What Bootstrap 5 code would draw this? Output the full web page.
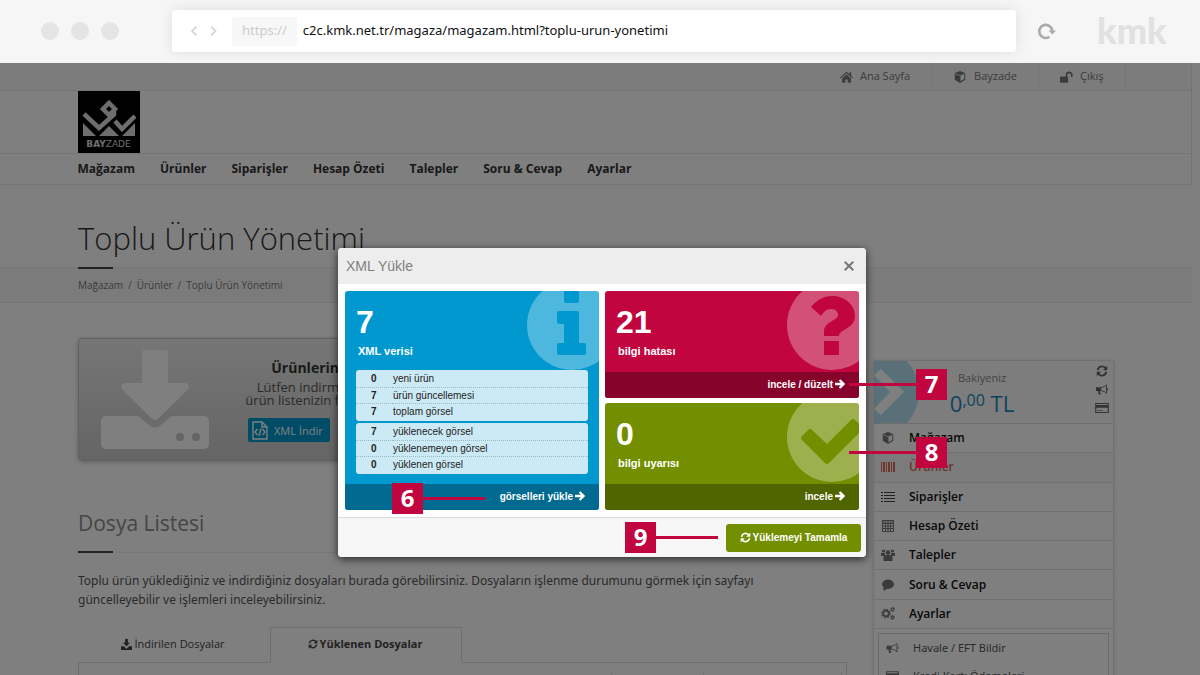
<!DOCTYPE html>
<html lang="tr">
<head>
<meta charset="utf-8">
<meta name="viewport" content="width=device-width, initial-scale=1">
<title>Toplu Ürün Yönetimi</title>
<link rel="stylesheet" href="https://cdn.jsdelivr.net/npm/bootstrap@5.3.0/dist/css/bootstrap.min.css">
<style>
  body { font-family: "Open Sans", sans-serif; font-size: 13px; color: #333; height: 100vh; overflow: hidden; }
  a { color: inherit; text-decoration: none; }
  svg { display: block; flex: none; }
  button { font-family: inherit; }

  /* browser chrome */
  .chrome { height: 63px; background: #f6f6f6; padding: 0 36px 1px 41px; }
  .dots { width: 131px; gap: 12px; }
  .dots span { width: 18px; height: 18px; border-radius: 50%; background: #e4e4e4; }
  .address { height: 42px; background: #fff; border-radius: 3px; box-shadow: 0 0 14px rgba(0,0,0,.1); padding: 0 16px; font-family: "Noto Sans", sans-serif; }
  .address button, .reload { border: 0; background: none; padding: 0; }
  .address button { width: 18px; color: #d8d8d8; }
  .scheme { height: 29px; margin: 0 6px 0 8px; padding: 0 10px; border-radius: 3px; background: #f7f7f7; color: #ccc; line-height: 27px; }
  .address input { border: 0; padding: 0; outline: 0; color: #111; height: 30px; padding-bottom: 2px; }
  .reload { width: 20px; margin: 0 40px 0 21px; color: #aaa; }
  .brandmark { font: 900 36px/36px Lato, sans-serif; color: #e1e1e1; width: 67px; padding-bottom: 2px; }

  /* shop page */
  .site { background: #fff; }
  .sheet { margin-right: 8px; }
  .wrap { max-width: 1060px; margin: 0 auto; padding: 0 12px; }
  .site-head { border-right: 1px solid #e8e8e8; border-bottom: 1px solid #ebebeb; }
  .topnav { background: #f9f9f9; border-bottom: 1px solid #ebebeb; font-size: 11px; color: #777; height: 28px; }
  .topnav a { padding: 0 21px; gap: 7px; height: 27px; border-right: 1px solid #ebebeb; }
  .logo-row { height: 63px; border-bottom: 1px solid #ebebeb; }
  .shop-logo { width: 62px; height: 62px; background: #000; color: #ddd; padding-top: 7px; }
  .shop-logo small { font: 9px/10px "DejaVu Sans", sans-serif; }
  .mainnav { height: 30px; gap: 25px; font-size: 12px; font-weight: 700; }
  .page-title { font-size: 31px; font-weight: 300; line-height: 42px; margin: 32px 0 8px; color: #333; }
  .rule { width: 35px; height: 2px; background: #444; }
  .crumbs { background: #f7f7f7; border: solid #ededed; border-width: 1px 0; height: 36px; font-size: 10px; color: #777; }
  .crumbs .rule { margin-top: -1px; }
  .crumbs ol { --bs-breadcrumb-item-padding-x: 5px; --bs-breadcrumb-divider-color: #777; --bs-breadcrumb-item-active-color: #777; font-size: 10px; padding-top: 9px; }
  .columns { gap: 26px; padding-top: 35px; }
  .side { width: 241px; padding-top: 22px; }

  .download { height: 123px; border: 1px solid #c2c2c2; border-radius: 4px; background: linear-gradient(#ececec, #cacaca); box-shadow: 0 1px 5px rgba(0,0,0,.25); padding: 11px 0 0 22px; gap: 39px; }
  .download-text { width: 91px; padding-top: 8px; font-size: 13px; line-height: 13px; color: #555; }
  .download-text strong { font-size: 14px; line-height: 20px; margin-bottom: 3px; color: #333; }
  .nowrap { white-space: nowrap; }
  .xml-btn { width: 82px; height: 24px; margin-top: 11px; padding: 0 4px; gap: 6px; border: 0; border-radius: 2px; background: #0098cf; color: #fff; font: 11px "Open Sans", sans-serif; }
  .section-title { font-size: 21px; line-height: 30px; margin: 47px 0 13px; color: #8c8c8c; }
  .section-rule { gap: 5px; margin-bottom: 18px; }
  .section-rule .line { height: 1px; background: #eee; }
  .intro, .side-more { font-family: "Noto Sans", sans-serif; }
  .intro { max-width: 740px; font-size: 12px; line-height: 19px; margin-bottom: 18px; color: #555; }
  .file-tabs { --bs-nav-tabs-border-color: #ddd; --bs-nav-tabs-border-radius: 0; font-size: 11px; }
  .file-tabs .nav-link { width: 192px; height: 36px; padding: 0 2px 2px 0; gap: 2px; color: #444; }
  .file-tabs .nav-link.active { font-weight: 700; color: #444; border-color: #ddd #ddd #fff; }
  .file-pane { height: 100px; border: solid #ddd; border-width: 0 1px; padding: 9px 4px 0 0; }
  .file-grid { height: 90px; border-right: 1px solid #e2e2e2; }
  .file-grid div { border-right: 1px solid #e8e8e8; }

  .side-box { border: 1px solid #e2e2e2; box-shadow: 0 1px 4px rgba(0,0,0,.15); }
  .balance { height: 63px; gap: 21px; background: #fafafa; border-bottom: 1px solid #ddd; color: #1a86c0; }
  .balance p { width: 84px; padding-top: 8px; color: #888; font-size: 11px; line-height: 18px; }
  .balance strong { font-weight: 400; font-size: 22px; line-height: 32px; color: #1a86c0; }
  .balance sup { font-size: 16px; top: -6px; }
  .quick { padding: 4px 4px 0 0; gap: 6px; color: #666; }
  .side-menu { height: 205px; font-size: 12px; font-weight: 600; color: #111; }
  .side-menu li { border-bottom: 1px solid #e2e2e2; }
  .side-menu a, .side-more a { gap: 14px; padding-left: 7px; }
  .side-menu svg, .side-more svg { color: #777; }
  .side-menu .current { background: #f6f6f6; }
  .side-menu .current a, .side-menu .current svg { color: #dc6a55; }
  .side-more { margin: 4px 4px 0; border: 1px solid #d4d4d4; font-size: 11px; color: #555; }
  .side-more li { height: 28px; }
  .shade { background: rgba(0,0,0,.5); }

  /* dialog */
  .xml-dialog { width: 528px; top: 185px; left: calc(50% - 262px); border-radius: 4px; background: #fff; box-shadow: 0 2px 8px rgba(0,0,0,.7); font-family: "Liberation Sans", sans-serif; font-size: 10px; }
  .xml-head { height: 36px; padding: 0 12px 0 8px; background: #ededed; border-radius: 4px 4px 0 0; color: #808080; }
  .xml-head h2 { font-size: 14px; font-weight: 400; }
  .xml-head button { border: 0; background: none; padding: 0; color: #777; }
  .xml-body { padding: 7px; gap: 6px; }
  .tile-col { flex: 1; gap: 5px; }
  .tile { border-radius: 3px; overflow: hidden; font-weight: 700; }
  .tile-main { padding: 13px 11px 10px; }
  .tile-main b { font-size: 32px; line-height: 36px; color: #fff; }
  .tile-main span { font-size: 11px; line-height: 16px; margin: 3px 2px 0; color: #fff; }
  .tile-icon { position: absolute; top: -12px; right: -19px; }
  .tile-foot { height: 26px; padding: 0 14px 2px 0; gap: 2px; color: #fff; }
  .blue { background: #0098cf; color: #0098cf; }
  .blue .tile-foot { background: #006a90; }
  .red { background: #c1053f; color: #c1053f; }
  .red .tile-foot { background: #86032b; }
  .green { background: #738f00; color: #738f00; }
  .green .tile-foot { background: #506400; }
  .lists { margin-top: 11px; gap: 2px; }
  .counts { background: #cceaf5; border-radius: 3px; padding: 1px 0 2px; color: #222; }
  .counts table { width: 100%; }
  .counts td { height: 16px; padding: 0; line-height: 15px; font-weight: 400; border-bottom: 1px dotted #9db9c4; }
  .counts tr:last-child td { border-bottom: 0; }
  .counts td:first-child { width: 37px; padding-left: 15px; font-weight: 700; }
  .xml-foot { height: 40px; padding-right: 5px; background: #f6f6f6; border-top: 1px solid #ddd; border-radius: 0 0 4px 4px; }
  .finish { width: 135px; height: 28px; border: 0; border-radius: 3px; background: #738f00; color: #fff; font-weight: 700; gap: 2px; padding: 0; }

  /* numbered callouts over the dialog */
  .callout { position: absolute; z-index: 3; }
  .callout b { width: 31px; height: 31px; background: #c1053f; color: #fff; font: 700 24px/30px "Open Sans", sans-serif; text-align: center; }
  .callout i { height: 3px; background: #c1053f; }
  .c6 { left: 54px; top: 235px; }
  .c7 { left: 511px; top: 121px; }
  .c8 { left: 511px; top: 189px; }
  .c9 { left: 287px; top: 274px; }
  .c6 i, .c9 i { width: 62px; }
  .c7 i, .c8 i { width: 67px; }
</style>
<script src="https://cdn.jsdelivr.net/npm/bootstrap@5.3.0/dist/js/bootstrap.bundle.min.js"></script>
</head>
<body class="d-flex flex-column">

<svg width="0" height="0" class="position-absolute" aria-hidden="true">
  <symbol id="sync" viewBox="0 0 16 16"><path fill="none" stroke="currentColor" stroke-width="2.4" d="M2.2 7A6 6 0 0 1 12.6 4M13.8 9A6 6 0 0 1 3.4 12"/><path fill="currentColor" d="M15 1v6H9zM1 15V9h6z"/></symbol>
  <symbol id="cube" viewBox="0 0 16 16"><path fill="currentColor" d="M8 0l7 2.700v8.800L8 16l-7-4.500V2.700z"/><path fill="#fff" d="M8.600 6.700l5-2v6l-5 3.100z"/><path stroke="#fff" stroke-width=".9" fill="none" d="M1.500 3.600L8 6.200l6.500-2.600"/></symbol>
  <symbol id="horn" viewBox="0 0 16 16"><path fill="currentColor" d="M0 5h7v5H5l1.500 4.500H3.700L2.500 10H0z"/><path fill="none" stroke="currentColor" stroke-width="1.200" d="M7 5.200c3 0 5.500-1.500 7-3.400v11.400c-1.500-1.900-4-3.300-7-3.400M15.300 6v3"/></symbol>
  <symbol id="card-i" viewBox="0 0 16 14"><path fill="none" stroke="currentColor" stroke-width="1.300" d="M.7 1.700h14.600v10.600H.7z"/><path fill="currentColor" d="M1 3.500h14v3.300H1zM2.500 9.500h2v1h-2zM5.500 9.500h3v1h-3z"/></symbol>
  <symbol id="arrow" viewBox="0 0 12 12"><path fill="none" stroke="currentColor" stroke-width="2.800" d="M0 6h10M5.500 1.200L10.300 6l-4.800 4.800"/></symbol>
</svg>

<header class="chrome d-flex align-items-center flex-shrink-0">
  <div class="dots d-flex flex-shrink-0"><span></span><span></span><span></span></div>
  <div class="address d-flex align-items-center flex-grow-1">
    <button type="button" aria-label="Geri"><svg width="12" height="12" viewBox="0 0 12 12" fill="none" stroke="currentColor" stroke-width="1.800"><path d="M8.500 1.500L4 6l4.500 4.500"/></svg></button>
    <button type="button" aria-label="İleri"><svg width="12" height="12" viewBox="0 0 12 12" fill="none" stroke="currentColor" stroke-width="1.800"><path d="M5 1.500L9.500 6 5 10.500"/></svg></button>
    <span class="scheme">https://</span>
    <input class="flex-grow-1" type="text" aria-label="Adres" value="c2c.kmk.net.tr/magaza/magazam.html?toplu-urun-yonetimi">
  </div>
  <button class="reload" type="button" aria-label="Yenile"><svg width="20" height="18" viewBox="0 0 20 18"><path d="M12.500 14.700A6.500 6.500 0 1 1 15.200 9" fill="none" stroke="currentColor" stroke-width="2.600"/><path d="M11.500 8.500h7.500l-3.700 4z" fill="currentColor"/></svg></button>
  <span class="brandmark">kmk</span>
</header>

<div class="site position-relative flex-grow-1">
 <div class="position-absolute top-0 start-0 w-100 h-100 overflow-hidden">
 <div class="sheet">
  <div class="site-head">
    <div class="topnav"><nav class="wrap d-flex justify-content-end pe-0">
      <a href="#" class="d-flex align-items-center"><svg width="13" height="12" viewBox="0 0 16 14" fill="currentColor"><path d="M8 .5L0 7.500l1 1 7-6 7 6 1-1-2.200-2V1.200h-2v2.500z"/><path d="M8 4L2.500 8.700V14h4v-4h3v4h4V8.700z"/></svg>Ana Sayfa</a>
      <a href="#" class="d-flex align-items-center"><svg width="14" height="12"><use href="#cube"/></svg>Bayzade</a>
      <a href="#" class="d-flex align-items-center"><svg width="13" height="12" viewBox="0 0 16 14"><path fill="currentColor" d="M0 6.500h10V14H0z"/><path fill="none" stroke="currentColor" stroke-width="2" d="M8 7V4.500a3.200 3.200 0 0 1 6.500 0V7"/></svg>Çıkış</a>
    </nav></div>
    <div class="logo-row"><div class="wrap">
      <a href="#" class="shop-logo d-flex flex-column align-items-center"><svg width="54" height="41" viewBox="0 0 54 41">
        <path fill="none" stroke="currentColor" stroke-width="4.500" d="M27 5l6 6-6 6-6-6zM32 12.500v4L17 30 2 16M33 23l7 8 13-13"/>
        <path fill="currentColor" d="M1 25l13 13H1zM27 28l10 10H17zM53 25v13H40z"/></svg>
        <small><b>BAY</b>ZADE</small></a>
    </div></div>
    <nav class="mainnav wrap d-flex align-items-center">
      <a href="#">Mağazam</a><a href="#">Ürünler</a><a href="#">Siparişler</a><a href="#">Hesap Özeti</a><a href="#">Talepler</a><a href="#">Soru &amp; Cevap</a><a href="#">Ayarlar</a>
    </nav>
  </div>

  <div class="wrap"><h1 class="page-title">Toplu Ürün Yönetimi</h1></div>
  <div class="crumbs"><div class="wrap"><div class="rule"></div>
    <nav aria-label="Konum"><ol class="breadcrumb mb-0"><li class="breadcrumb-item"><a href="#">Mağazam</a></li><li class="breadcrumb-item"><a href="#">Ürünler</a></li><li class="breadcrumb-item active">Toplu Ürün Yönetimi</li></ol></nav>
  </div></div>

  <div class="wrap columns d-flex">
    <main class="flex-grow-1">
      <div class="download d-flex align-items-start">
        <svg width="108" height="100" viewBox="0 0 108 100"><rect y="66" width="108" height="33" rx="5" fill="#fff"/><path d="M36 65l12 10q6 5 12 0l12-10z" fill="#d6d6d6"/><path d="M44 0h20q3 0 3 3v30h17q6 1 3 6L58 68q-4 4-8 0L21 39q-3-5 3-6h17V3q0-3 3-3z" fill="#fff"/><circle cx="79" cy="87" r="4" fill="#cacaca"/><circle cx="95" cy="87" r="4" fill="#cacaca"/></svg>
        <div class="download-text">
          <div class="nowrap d-flex flex-column align-items-end"><strong>Ürünlerin</strong><span>Lütfen indirm</span><span>ürün listenizin f</span></div>
          <button type="button" class="xml-btn d-flex align-items-center"><svg width="16" height="19" viewBox="0 0 16 19" fill="none" stroke="currentColor" stroke-width="1.400"><path d="M1 1h9l5 5v12H1zM10 1v5h5M5.500 8L3 11l2.500 3M10.500 8l2.500 3-2.500 3M9 7.500L7 15"/></svg><span class="nowrap">XML İndir</span></button>
        </div>
      </div>
      <h2 class="section-title">Dosya Listesi</h2>
      <div class="section-rule d-flex align-items-center"><div class="rule"></div><div class="line flex-grow-1"></div></div>
      <p class="intro">Toplu ürün yüklediğiniz ve indirdiğiniz dosyaları burada görebilirsiniz. Dosyaların işlenme durumunu görmek için sayfayı güncelleyebilir ve işlemleri inceleyebilirsiniz.</p>
      <ul class="nav nav-tabs file-tabs">
        <li class="nav-item"><a href="#" class="nav-link d-flex align-items-center justify-content-center"><svg width="11" height="11" viewBox="0 0 12 12" fill="currentColor"><path d="M4.500 0h3v4H10L6 8 2 4h2.500zM0 8h3l3 2.500L9 8h3v4H0z"/></svg>İndirilen Dosyalar</a></li>
        <li class="nav-item"><a href="#" class="nav-link active d-flex align-items-center justify-content-center"><svg width="10" height="10"><use href="#sync"/></svg>Yüklenen Dosyalar</a></li>
      </ul>
      <div class="file-pane"><div class="file-grid d-flex"><div style="width:70%"></div><div style="width:12%"></div></div></div>
    </main>

    <aside class="side flex-shrink-0"><div class="side-box">
      <div class="balance d-flex">
        <svg width="45" height="62" viewBox="0 0 45 62"><circle cx="0" cy="31" r="45" fill="#b2e0f1"/><path d="M0 14l7-6 23 23L7 54l-7-6 16-17z" fill="#fff"/></svg>
        <p class="mb-0 text-center nowrap">Bakiyeniz<br><strong>0<sup>,00</sup> TL</strong></p>
        <div class="quick d-flex flex-column align-items-center ms-auto"><svg width="12" height="12"><use href="#sync"/></svg><svg width="12" height="13"><use href="#horn"/></svg><svg width="14" height="12"><use href="#card-i"/></svg></div>
      </div>
      <ul class="side-menu list-unstyled mb-0 d-flex flex-column">
        <li class="flex-fill d-flex"><a href="#" class="d-flex align-items-center"><svg width="14" height="12"><use href="#cube"/></svg>Mağazam</a></li>
        <li class="flex-fill d-flex current"><a href="#" class="d-flex align-items-center"><svg width="14" height="10" viewBox="0 0 14 10" fill="currentColor"><path d="M0 0h1v10H0zM2 0h2v10H2zM5 0h1v10H5zM7 0h2v10H7zM10 0h1v10h-1zM12 0h2v10h-2z"/></svg>Ürünler</a></li>
        <li class="flex-fill d-flex"><a href="#" class="d-flex align-items-center"><svg width="14" height="10" viewBox="0 0 14 10" fill="#444"><path d="M0 0h2v1H0zM3 0h11v1H3zM0 3h2v1H0zM3 3h11v1H3zM0 6h2v1H0zM3 6h11v1H3zM0 9h2v1H0zM3 9h11v1H3z"/></svg>Siparişler</a></li>
        <li class="flex-fill d-flex"><a href="#" class="d-flex align-items-center"><svg width="14" height="12" viewBox="0 0 14 12" fill="none" stroke="currentColor"><path d="M1.500.5h11v11h-11zM1.500 3.500h11M1.500 6h11M1.500 8.500h11M4.500 3.500v8M7 3.500v8M9.500 3.500v8M2 2h10"/></svg>Hesap Özeti</a></li>
        <li class="flex-fill d-flex"><a href="#" class="d-flex align-items-center"><svg width="14" height="12" viewBox="0 0 14 12" fill="currentColor"><circle cx="2.500" cy="2" r="1.600"/><circle cx="11.500" cy="2" r="1.600"/><circle cx="7" cy="3.600" r="2.300"/><path d="M0 4h4v3H0zM10 4h4v3h-4zM2.500 8q1-2 2.500-2h4q1.500 0 2.500 2v4h-9z"/></svg>Talepler</a></li>
        <li class="flex-fill d-flex"><a href="#" class="d-flex align-items-center"><svg width="14" height="12" viewBox="0 0 14 12" fill="currentColor"><ellipse cx="7" cy="5.200" rx="6" ry="4.700"/><path d="M2.500 7v5l5-3z"/></svg>Soru &amp; Cevap</a></li>
        <li class="flex-fill d-flex"><a href="#" class="d-flex align-items-center"><svg width="14" height="13" viewBox="0 0 14 13" fill="none" stroke="currentColor"><circle cx="5" cy="6.500" r="2.800" stroke-width="1.800"/><circle cx="5" cy="6.500" r="4.200" stroke-width="1.300" stroke-dasharray="1.700 1.600"/><circle cx="11.500" cy="2.500" r="1.500" stroke-width="1.300"/><circle cx="11.500" cy="10.500" r="1.500" stroke-width="1.300"/></svg>Ayarlar</a></li>
      </ul>
      <ul class="side-more list-unstyled">
        <li class="d-flex"><a href="#" class="d-flex align-items-center"><svg width="13" height="12"><use href="#horn"/></svg>Havale / EFT Bildir</a></li>
        <li class="d-flex"><a href="#" class="d-flex align-items-center"><svg width="13" height="12"><use href="#card-i"/></svg>Kredi Kartı Ödemeleri</a></li>
      </ul>
    </div></aside>
  </div>
 </div>
 <div class="shade position-absolute top-0 start-0 w-100 h-100"></div>
 </div>

 <section class="xml-dialog position-absolute" role="dialog" aria-labelledby="xmlTitle">
  <div class="xml-head d-flex align-items-center justify-content-between"><h2 id="xmlTitle" class="mb-0">XML Yükle</h2>
    <button type="button" aria-label="Kapat"><svg width="10" height="10" viewBox="0 0 10 10" stroke="currentColor" stroke-width="2"><path d="M.7.7l8.600 8.600M9.300.7L.7 9.300"/></svg></button></div>
  <div class="xml-body d-flex">
    <div class="tile-col d-flex flex-column">
      <div class="tile blue position-relative d-flex flex-column">
        <svg class="tile-icon" width="92" height="92" viewBox="0 0 92 92"><circle cx="46" cy="46" r="45" fill="#fff" fill-opacity=".3"/><path fill="currentColor" d="M38 8h15v14q0 2-2 2H40q-2 0-2-2zM33 32h18q2 0 2 2v30h5q2 0 2 2v8q0 2-2 2H33q-2 0-2-2v-8q0-2 2-2h5V45h-5q-2 0-2-2v-9q0-2 2-2z"/></svg>
        <div class="tile-main position-relative"><b class="d-block">7</b><span class="d-block">XML verisi</span>
          <div class="lists d-flex flex-column">
            <div class="counts"><table>
              <tr><td>0</td><td>yeni ürün</td></tr>
              <tr><td>7</td><td>ürün güncellemesi</td></tr>
              <tr><td>7</td><td>toplam görsel</td></tr>
            </table></div>
            <div class="counts"><table>
              <tr><td>7</td><td>yüklenecek görsel</td></tr>
              <tr><td>0</td><td>yüklenemeyen görsel</td></tr>
              <tr><td>0</td><td>yüklenen görsel</td></tr>
            </table></div>
          </div>
        </div>
        <a href="#" class="tile-foot d-flex align-items-center justify-content-end">görselleri yükle<svg width="10" height="10"><use href="#arrow"/></svg></a>
      </div>
    </div>
    <div class="tile-col d-flex flex-column">
      <div class="tile red position-relative flex-fill d-flex flex-column">
        <svg class="tile-icon" width="92" height="92" viewBox="0 0 92 92"><circle cx="46" cy="46" r="45" fill="#fff" fill-opacity=".3"/><path fill="currentColor" d="M25 28C31 21 37 17 46 17c12 0 23 8 23 20 0 13-16 13-16 20H38v-4c0-11 14-11 14-17 0-4-3-6-7-6-5 0-7 3-10 7zM38 62h15v14H38z"/></svg>
        <div class="tile-main flex-grow-1"><b class="d-block">21</b><span class="d-block">bilgi hatası</span></div>
        <a href="#" class="tile-foot d-flex align-items-center justify-content-end position-relative">incele / düzelt<svg width="10" height="10"><use href="#arrow"/></svg></a>
      </div>
      <div class="tile green position-relative flex-fill d-flex flex-column">
        <svg class="tile-icon" width="92" height="92" viewBox="0 0 92 92"><circle cx="46" cy="46" r="45" fill="#fff" fill-opacity=".3"/><path fill="currentColor" d="M16 49q-2-2 0-4l6-6q2-2 4 0l15 14 24-24q2-2 4 0l7 6q2 2 0 4L43 72q-2 2-4 0z"/></svg>
        <div class="tile-main flex-grow-1"><b class="d-block">0</b><span class="d-block">bilgi uyarısı</span></div>
        <a href="#" class="tile-foot d-flex align-items-center justify-content-end position-relative">incele<svg width="10" height="10"><use href="#arrow"/></svg></a>
      </div>
    </div>
  </div>
  <div class="xml-foot d-flex align-items-center justify-content-end">
    <button type="button" class="finish d-flex align-items-center justify-content-center"><svg width="11" height="11"><use href="#sync"/></svg>Yüklemeyi Tamamla</button>
  </div>
  <div class="callout c6 d-flex align-items-center"><b>6</b><i></i></div>
  <div class="callout c7 d-flex align-items-center"><i></i><b>7</b></div>
  <div class="callout c8 d-flex align-items-center"><i></i><b>8</b></div>
  <div class="callout c9 d-flex align-items-center"><b>9</b><i></i></div>
 </section>
</div>
</body>
</html>
